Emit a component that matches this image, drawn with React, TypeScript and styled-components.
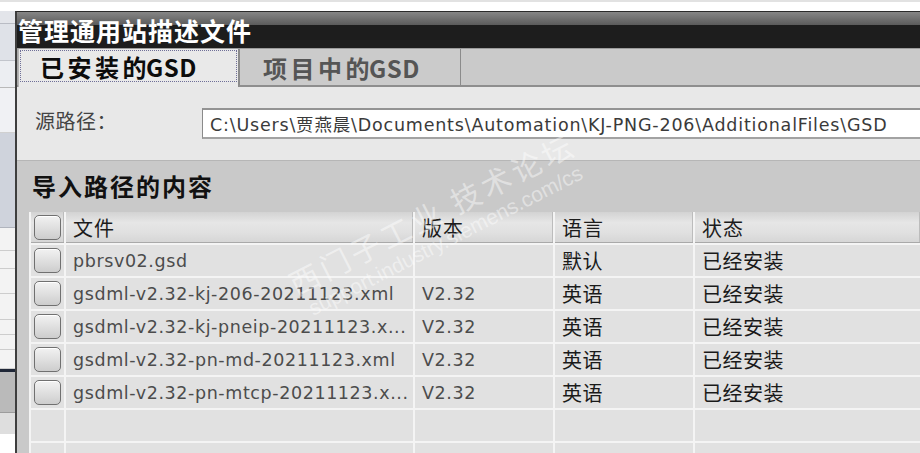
import styled, { createGlobalStyle } from "styled-components";

const GlobalStyle = createGlobalStyle`
  html, body {
    margin: 0;
    padding: 0;
    background: #fff;
  }
  body {
    font-family: "DejaVu Sans", "Noto Sans CJK SC", sans-serif;
  }
`;

const CJK = `"Noto Sans CJK SC", "DejaVu Sans", sans-serif`;

const Screen = styled.div`
  position: relative;
  width: 920px;
  height: 453px;
  overflow: hidden;
  display: flex;
  flex-direction: column;
  background: #fff;
`;

const TopStrip = styled.div`
  flex: none;
  height: 9px;
  border-top: 2px solid #e2e2e2;
  background: #fff;
`;

const Body = styled.div`
  flex: 1;
  min-height: 0;
  display: flex;
`;

/* the window behind the dialog, only a sliver of it shows */
const BackWindow = styled.div`
  flex: none;
  width: 15px;
  display: flex;
  flex-direction: column;
  overflow: hidden;
`;

const BackBand = styled.div<{ $h: number; $bg: string; $line?: string }>`
  flex: none;
  height: ${(p) => p.$h}px;
  background: ${(p) => p.$bg};
  border-bottom: 1px solid ${(p) => p.$line ?? "transparent"};
`;

const Dialog = styled.div`
  flex: 1;
  min-width: 0;
  display: flex;
  flex-direction: column;
  border-left: 2px solid #3e3e3e;
  border-top: 1px solid #2b2b2b;
`;

const TitleBar = styled.div`
  flex: none;
  height: 36px;
  padding-left: 1px;
  background: linear-gradient(#868686, #5b5b5b 13px, #1d1d1d 13px, #1d1d1d);
  color: #fff;
  font-family: ${CJK};
  font-weight: 700;
  font-size: 25px;
  line-height: 37px;
  letter-spacing: 1px;
  white-space: nowrap;
`;

const TabStrip = styled.div`
  flex: none;
  box-sizing: border-box;
  height: 39px;
  display: flex;
  background: #cacaca;
  border-top: 1px solid #9c9c9c;
  border-bottom: 2px solid #8e8e8e;
`;

const TabEdge = styled.div`
  flex: none;
  width: 1px;
  background: #a9a9a9;
`;

const Tab = styled.div<{ $active?: boolean }>`
  flex: none;
  box-sizing: border-box;
  width: ${(p) => (p.$active ? 221 : 222)}px;
  height: ${(p) => (p.$active ? 38 : 36)}px;
  display: flex;
  padding: 1px;
  background: ${(p) => (p.$active ? "#e9e9e9" : "#cbcbcb")};
  border-left: 1px solid ${(p) => (p.$active ? "#b5b5b5" : "#8b8b8b")};
  border-right: 1px solid #8b8b8b;
  color: ${(p) => (p.$active ? "#0c0c0c" : "#555")};
  font-family: ${CJK};
  font-weight: 700;
  font-size: 24px;
  letter-spacing: 3.5px;
  white-space: nowrap;
`;

const TabFocus = styled.div<{ $active?: boolean }>`
  flex: 1;
  display: flex;
  align-items: center;
  padding-left: ${(p) => (p.$active ? 19 : 21)}px;
  margin-bottom: ${(p) => (p.$active ? 4 : 0)}px;
  border: 1px dotted ${(p) => (p.$active ? "#6f6f98" : "transparent")};
`;

const TabLatin = styled.span`
  letter-spacing: 0.5px;
  margin-left: -4px;
`;

const PathRow = styled.div`
  flex: none;
  height: 73px;
  display: flex;
  align-items: center;
  padding-left: 18px;
  background: #e8e8e8;
  border-bottom: 1px solid #b6b6b6;
`;

const PathLabel = styled.div`
  flex: none;
  width: 167px;
  margin-top: -6px;
  font-family: ${CJK};
  font-size: 20px;
  letter-spacing: 0.5px;
  color: #444;
`;

const PathInput = styled.div`
  flex: 1;
  box-sizing: border-box;
  height: 31px;
  display: flex;
  align-items: center;
  padding-left: 7px;
  background: #fff;
  border-top: 2px solid #939393;
  border-bottom: 2px solid #a2a2a2;
  border-left: 1px solid #8a8a8a;
  color: #3a3a3a;
  font-size: 17.5px;
  letter-spacing: 0.8px;
  white-space: nowrap;
  overflow: hidden;
`;

const Content = styled.div`
  flex: 1;
  min-height: 0;
  display: flex;
  flex-direction: column;
  padding-left: 12px;
  background: #c9c9c9;
`;

const Heading = styled.div`
  flex: none;
  height: 49px;
  padding-bottom: 2px;
  display: flex;
  align-items: center;
  padding-left: 3px;
  font-family: ${CJK};
  font-weight: 700;
  font-size: 24px;
  letter-spacing: 2px;
  color: #111;
`;

const Table = styled.div`
  display: grid;
  grid-template-columns: 33px 347px 138px 138px 1fr;
  grid-auto-rows: 31px;
  gap: 2px;
  padding-left: 2px;
  background: #f4f4f4;
`;

const HeadCell = styled.div<{ $box?: boolean }>`
  box-sizing: border-box;
  display: flex;
  align-items: center;
  justify-content: ${(p) => (p.$box ? "center" : "flex-start")};
  padding-left: ${(p) => (p.$box ? 0 : 7)}px;
  background: linear-gradient(#d3d3d3, #e6e6e6 35%, #e0e0e0 70%, #d6d6d6);
  border-bottom: 1px solid #a9a9a9;
  box-shadow: inset -1px 0 #bcbcbc;
  font-family: ${CJK};
  font-size: 20px;
  letter-spacing: 1px;
  color: #1c1c1c;
  white-space: nowrap;
`;

const Cell = styled.div<{ $box?: boolean; $cjk?: boolean }>`
  box-sizing: border-box;
  display: flex;
  align-items: center;
  justify-content: ${(p) => (p.$box ? "center" : "flex-start")};
  padding-left: ${(p) => (p.$box ? 0 : 7)}px;
  background: #e1e1e1;
  font-family: ${(p) =>
    p.$cjk ? CJK : `"DejaVu Sans", "Noto Sans CJK SC", sans-serif`};
  font-size: ${(p) => (p.$cjk ? 20 : 17.5)}px;
  letter-spacing: ${(p) => (p.$cjk ? 0.5 : 0.6)}px;
  color: ${(p) => (p.$cjk ? "#1a1a1a" : "#4c4c4c")};
  white-space: nowrap;
  overflow: hidden;
`;

const CheckBox = styled.div`
  box-sizing: border-box;
  width: 27px;
  height: 25px;
  border: 1.5px solid #707070;
  border-radius: 5px;
  background: linear-gradient(#f2f2f2, #dedede 55%, #cdcdcd);
  box-shadow: inset 0 1px 0 #fff;
`;

const Watermark = styled.div`
  position: absolute;
  left: 282px;
  top: 268px;
  transform: rotate(-27deg);
  transform-origin: 0 0;
  pointer-events: none;
  color: rgba(255, 255, 255, 0.45);
  white-space: nowrap;
`;

const WatermarkBig = styled.div`
  font-family: ${CJK};
  font-size: 30px;
  line-height: 38px;
  letter-spacing: 4px;
`;

const WatermarkSmall = styled.div`
  padding-left: 6px;
  font-family: "Liberation Sans", sans-serif;
  font-size: 21px;
  line-height: 24px;
`;

const backBands = [
  { h: 12, bg: "#e3e5ea", line: "#b9bcc4" },
  { h: 36, bg: "#dfe2e8", line: "#c2c5cc" },
  { h: 26, bg: "#eceef2", line: "#b9b9b9" },
  { h: 44, bg: "#f0f1f4", line: "#d0d0d0" },
  { h: 94, bg: "#cfd3dc", line: "#b0b4bd" },
  { h: 22, bg: "#f3f3f3", line: "#cdcdcd" },
  { h: 17, bg: "#f3f3f3", line: "#cdcdcd" },
  { h: 24, bg: "#f3f3f3", line: "#cdcdcd" },
  { h: 25, bg: "#f3f3f3", line: "#cdcdcd" },
  { h: 14, bg: "#f3f3f3", line: "#cdcdcd" },
  { h: 14, bg: "#f3f3f3", line: "#cdcdcd" },
  { h: 18, bg: "#f3f3f3", line: "#cdcdcd" },
  { h: 2, bg: "#1f2737" },
  { h: 40, bg: "#bababa", line: "#9c9c9c" },
  { h: 20, bg: "#dedede" },
];

type Row = { file: string; version: string; lang: string; state: string };

const rows: Row[] = [
  { file: "pbrsv02.gsd", version: "", lang: "默认", state: "已经安装" },
  {
    file: "gsdml-v2.32-kj-206-20211123.xml",
    version: "V2.32",
    lang: "英语",
    state: "已经安装",
  },
  {
    file: "gsdml-v2.32-kj-pneip-20211123.x...",
    version: "V2.32",
    lang: "英语",
    state: "已经安装",
  },
  {
    file: "gsdml-v2.32-pn-md-20211123.xml",
    version: "V2.32",
    lang: "英语",
    state: "已经安装",
  },
  {
    file: "gsdml-v2.32-pn-mtcp-20211123.x...",
    version: "V2.32",
    lang: "英语",
    state: "已经安装",
  },
];

export default function App() {
  return (
    <Screen>
      <GlobalStyle />
      <TopStrip />
      <Body>
        <BackWindow>
          {backBands.map((b, i) => (
            <BackBand key={i} $h={b.h} $bg={b.bg} $line={b.line} />
          ))}
        </BackWindow>
        <Dialog>
          <TitleBar>管理通用站描述文件</TitleBar>
          <TabStrip>
            <TabEdge />
            <Tab $active>
              <TabFocus $active>
                已安装的<TabLatin> GSD</TabLatin>
              </TabFocus>
            </Tab>
            <Tab>
              <TabFocus>
                项目中的<TabLatin> GSD</TabLatin>
              </TabFocus>
            </Tab>
          </TabStrip>
          <PathRow>
            <PathLabel>源路径：</PathLabel>
            <PathInput>
              C:\Users\贾燕晨\Documents\Automation\KJ-PNG-206\AdditionalFiles\GSD
            </PathInput>
          </PathRow>
          <Content>
            <Heading>导入路径的内容</Heading>
            <Table>
              <HeadCell $box>
                <CheckBox />
              </HeadCell>
              <HeadCell>文件</HeadCell>
              <HeadCell>版本</HeadCell>
              <HeadCell>语言</HeadCell>
              <HeadCell>状态</HeadCell>
              {rows.map((r) => [
                <Cell key={r.file + "-box"} $box>
                  <CheckBox />
                </Cell>,
                <Cell key={r.file}>{r.file}</Cell>,
                <Cell key={r.file + "-v"}>{r.version}</Cell>,
                <Cell key={r.file + "-l"} $cjk>
                  {r.lang}
                </Cell>,
                <Cell key={r.file + "-s"} $cjk>
                  {r.state}
                </Cell>,
              ])}
              {[0, 1].map((i) =>
                ["a", "b", "c", "d", "e"].map((c) => <Cell key={`e${i}${c}`} />)
              )}
            </Table>
          </Content>
        </Dialog>
      </Body>
      <Watermark>
        <WatermarkBig>西门子工业 技术论坛</WatermarkBig>
        <WatermarkSmall>support.industry.siemens.com/cs</WatermarkSmall>
      </Watermark>
    </Screen>
  );
}
